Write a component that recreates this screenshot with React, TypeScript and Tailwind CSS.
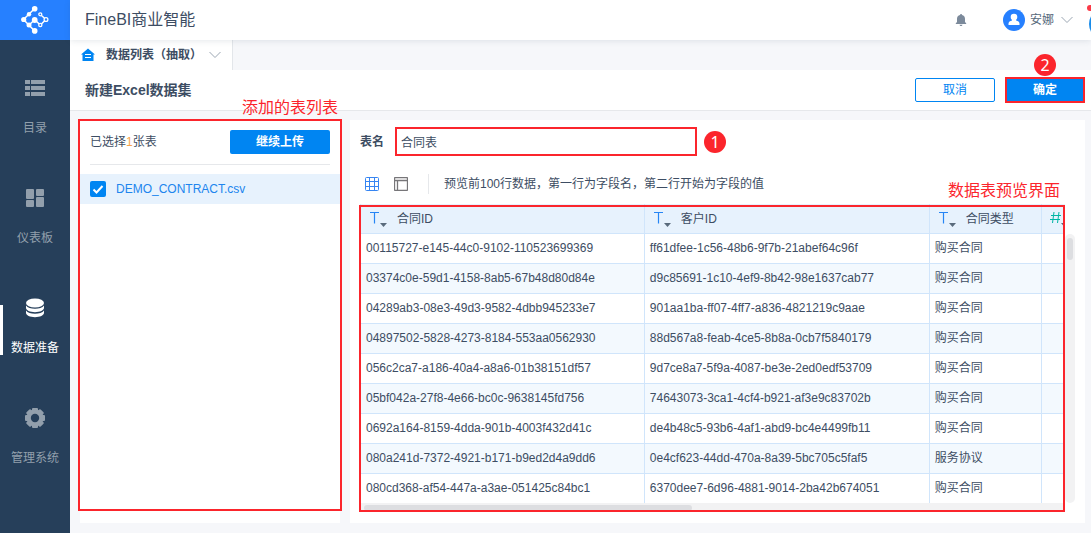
import React from "react";

const ROWS = [
  ["00115727-e145-44c0-9102-110523699369", "ff61dfee-1c56-48b6-9f7b-21abef64c96f", "购买合同"],
  ["03374c0e-59d1-4158-8ab5-67b48d80d84e", "d9c85691-1c10-4ef9-8b42-98e1637cab77", "购买合同"],
  ["04289ab3-08e3-49d3-9582-4dbb945233e7", "901aa1ba-ff07-4ff7-a836-4821219c9aae", "购买合同"],
  ["04897502-5828-4273-8184-553aa0562930", "88d567a8-feab-4ce5-8b8a-0cb7f5840179", "购买合同"],
  ["056c2ca7-a186-40a4-a8a6-01b38151df57", "9d7ce8a7-5f9a-4087-be3e-2ed0edf53709", "购买合同"],
  ["05bf042a-27f8-4e66-bc0c-9638145fd756", "74643073-3ca1-4cf4-b921-af3e9c83702b", "购买合同"],
  ["0692a164-8159-4dda-901b-4003f432d41c", "de4b48c5-93b6-4af1-abd9-bc4e4499fb11", "购买合同"],
  ["080a241d-7372-4921-b171-b9ed2d4a9dd6", "0e4cf623-44dd-470a-8a39-5bc705c5faf5", "服务协议"],
  ["080cd368-af54-447a-a3ae-051425c84bc1", "6370dee7-6d96-4881-9014-2ba42b674051", "购买合同"],
];

function Logo() {
  return (
    <svg width="28" height="28" viewBox="0 0 28 28" fill="#fff" stroke="#fff" className="shrink-0" aria-hidden="true">
      <path d="M13.700 2.500 2.500 13.500 13.700 25M8 19l5.700-5.200 5.600 5.200M19.300 8.500l5.700 5-5.700 5.500" fill="none" strokeWidth="1.500" />
      <g stroke="none">
        <circle cx="13.700" cy="2.800" r="2.800" />
        <circle cx="8" cy="8.300" r="2.200" />
        <circle cx="2.700" cy="13.500" r="2.600" />
        <circle cx="8" cy="19" r="2.500" />
        <circle cx="13.700" cy="24.900" r="2.800" />
        <circle cx="13.700" cy="14" r="2.900" />
      </g>
      <circle cx="19.300" cy="8.300" r="1.500" fill="#2680ff" strokeWidth="1.300" />
      <circle cx="25" cy="13.500" r="1.900" fill="#2680ff" strokeWidth="1.300" />
      <circle cx="19.300" cy="19" r="1.600" fill="#2680ff" strokeWidth="1.300" />
    </svg>
  );
}

function CatalogIcon() {
  return (
    <svg width="20" height="20" viewBox="0 0 20 20" fill="currentColor" className="shrink-0" aria-hidden="true">
      <path d="M0 2h5v4H0zM6 2h14v4H6zM0 8h5v4H0zM6 8h14v4H6zM0 14h5v4H0zM6 14h14v4H6z" />
    </svg>
  );
}

function DashboardIcon() {
  return (
    <svg width="20" height="20" viewBox="0 0 20 20" fill="currentColor" className="shrink-0" aria-hidden="true">
      <rect x="1" y="1" width="8" height="10" rx="1" />
      <rect x="11" y="1" width="8" height="7" rx="1" />
      <rect x="1" y="12" width="8" height="7" rx="1" />
      <rect x="11" y="9" width="8" height="10" rx="1" />
    </svg>
  );
}

function DatabaseIcon() {
  return (
    <svg width="20" height="20" viewBox="0 0 20 20" fill="currentColor" className="shrink-0" aria-hidden="true">
      <ellipse cx="10" cy="5" rx="9" ry="4.500" />
      <path d="M1 7.500c1.500 2.300 5 3.200 9 3.200s7.500-.9 9-3.200v2.300c0 2.500-4 4.400-9 4.400s-9-1.900-9-4.400z" />
      <path d="M1 12.500c1.500 2.300 5 3.200 9 3.200s7.500-.9 9-3.200v2.300c0 2.500-4 4.400-9 4.400s-9-1.900-9-4.400z" />
    </svg>
  );
}

function GearIcon() {
  return (
    <svg width="20" height="20" viewBox="0 0 20 20" className="shrink-0" aria-hidden="true">
      <g fill="currentColor">
        <rect x="7" y="0" width="6" height="20" rx="1" />
        <rect x="7" y="0" width="6" height="20" rx="1" transform="rotate(45 10 10)" />
        <rect x="7" y="0" width="6" height="20" rx="1" transform="rotate(90 10 10)" />
        <rect x="7" y="0" width="6" height="20" rx="1" transform="rotate(135 10 10)" />
        <circle cx="10" cy="10" r="8.400" />
      </g>
      <circle cx="10" cy="10" r="4.200" fill="#263f5a" />
    </svg>
  );
}

function HomeIcon() {
  return (
    <svg width="14" height="14" viewBox="0 0 14 14" className="shrink-0" aria-hidden="true">
      <path d="M7 0.500 14 6.500H12.500V13H1.500V6.500H0z" fill="#0085f2" />
      <path d="M4 6.500h6M4 9.500h6" stroke="#fff" />
    </svg>
  );
}

function ChevronIcon() {
  return (
    <svg width="12" height="8" viewBox="0 0 12 8" fill="none" stroke="currentColor" className="shrink-0" aria-hidden="true">
      <path d="M.5 1 6 6.500 11.500 1" />
    </svg>
  );
}

function BellIcon() {
  return (
    <svg width="12" height="12" viewBox="0 0 12 12" fill="#7c8a9b" className="shrink-0" aria-hidden="true">
      <path d="M6 0c.6 0 1 .4 1 .9C8.900 1.300 10 2.800 10 4.800V8l1.200 1.300v.7H.8v-.7L2 8V4.800C2 2.800 3.100 1.300 5 .9 5 .4 5.400 0 6 0zM4.500 10.700h3C7.300 11.600 6.700 12 6 12s-1.300-.4-1.500-1.300z" />
    </svg>
  );
}

function AvatarIcon() {
  return (
    <svg width="22" height="22" viewBox="0 0 22 22" className="shrink-0" aria-hidden="true">
      <circle cx="11" cy="11" r="11" fill="#2680ff" />
      <circle cx="11" cy="8" r="3.300" fill="#fff" />
      <path d="M9 10h4v1.500c2 .6 3.500 1.300 3.500 3V16h-11v-1.500c0-1.700 1.500-2.400 3.500-3z" fill="#fff" />
    </svg>
  );
}

function GridIcon() {
  return (
    <svg width="14" height="14" viewBox="0 0 14 14" fill="none" stroke="#3685f2" className="shrink-0" aria-hidden="true">
      <rect x=".5" y=".5" width="13" height="13" rx="1" />
      <path d="M.5 4.500h13M.5 9.500h13M4.500.5v13M9.500.5v13" />
    </svg>
  );
}

function LayoutIcon() {
  return (
    <svg width="14" height="14" viewBox="0 0 14 14" fill="none" stroke="#777679" className="shrink-0" aria-hidden="true">
      <rect x=".5" y=".5" width="13" height="13" rx="1" strokeWidth="1.300" />
      <path d="M.5 3.500h13M3.500 3.500v10" strokeWidth="1.300" />
    </svg>
  );
}

function FieldType({ numeric = false }: { numeric?: boolean }) {
  return (
    <svg width="20" height="18" viewBox="0 0 20 18" fill="none" className="shrink-0" aria-hidden="true">
      {numeric ? (
        <path d="M4 2 2.500 13M9 2 7.500 13M1 5.500h10M0 9.500h10" stroke="#00b5a5" />
      ) : (
        <path d="M1 2.500h9M5.500 2.500v11" stroke="#2685f5" strokeWidth="1.200" />
      )}
      <path d="M11 13h7l-3.500 4z" fill="#5a6b7c" />
    </svg>
  );
}

function Badge({ n }: { n: number }) {
  return (
    <span className="flex size-[22px] items-center justify-center rounded-full bg-[#fb252c] font-['Noto_Sans',sans-serif] text-base leading-none text-white">
      {n}
    </span>
  );
}

const NAV = [
  { label: "目录", icon: <CatalogIcon /> },
  { label: "仪表板", icon: <DashboardIcon /> },
  { label: "数据准备", icon: <DatabaseIcon />, active: true },
  { label: "管理系统", icon: <GearIcon /> },
];

function Sidebar() {
  return (
    <aside className="flex w-[70px] shrink-0 flex-col bg-[#263f5a]">
      <a href="#home" aria-label="FineBI" className="flex h-10 items-center justify-center bg-[#2680ff]">
        <Logo />
      </a>
      <nav className="flex flex-col gap-[50px] pt-[38px]">
        {NAV.map((item) => (
          <a
            key={item.label}
            href={"#" + item.label}
            className={
              item.active
                ? "relative flex h-[60px] flex-col items-center text-white"
                : "flex h-[60px] flex-col items-center text-[#929fac]"
            }
          >
            {item.active && <span className="absolute top-[7px] left-0 h-[50px] w-[3px] bg-white" />}
            {item.icon}
            <span className="mt-5 leading-5">{item.label}</span>
          </a>
        ))}
      </nav>
    </aside>
  );
}

function Header() {
  return (
    <header className="relative z-10 flex h-10 shrink-0 items-center bg-white pr-[18px] pl-[15px] shadow-[0_1px_6px_rgba(38,63,90,0.12)]">
      <h1 className="flex-1 text-base font-normal">FineBI商业智能</h1>
      <button aria-label="通知" className="mr-9">
        <BellIcon />
      </button>
      <button className="flex items-center text-[#55677a]">
        <AvatarIcon />
        <span className="mr-[7px] ml-[5px]">安娜</span>
        <span className="text-[#9ba6b2]">
          <ChevronIcon />
        </span>
      </button>
      <div className="absolute top-0 right-0 h-10 w-1 overflow-hidden">
        <span className="absolute top-2 left-[2px] size-8 rounded-full bg-[#1a8cea]" />
        <span className="absolute top-[5px] left-0 size-[6px] rounded-full bg-[#fb3a48]" />
      </div>
    </header>
  );
}

function TablePanel() {
  return (
    <div className="relative flex min-w-0 flex-1 flex-col pr-[10px]">
      <div className="flex-1 overflow-hidden">
        <table className="w-full table-fixed border-separate border-spacing-0 text-left">
          <colgroup>
            <col className="w-[40.400%]" />
            <col className="w-[40.400%]" />
            <col className="w-[16%]" />
            <col />
          </colgroup>
          <thead>
            <tr className="h-[30px] bg-[#e7f2fd]">
              {["合同ID", "客户ID", "合同类型"].map((name) => (
                <th key={name} className="border-r border-b border-[#d0e5fb] p-0 pl-2 font-normal first:border-l">
                  <span className="flex items-center gap-2">
                    <FieldType />
                    {name}
                  </span>
                </th>
              ))}
              <th aria-label="数值" className="overflow-hidden border-b border-[#d0e5fb] p-0 pl-2">
                <FieldType numeric />
              </th>
            </tr>
          </thead>
          <tbody>
            {ROWS.map((row) => (
              <tr key={row[0]} className="h-[30px] even:bg-[#f3f9fe]">
                {row.map((cell, i) => (
                  <td key={i} className="truncate border-r border-b border-[#d0e5fb] p-0 pb-[2px] pl-[5px] first:border-l">
                    {cell}
                  </td>
                ))}
                <td className="border-b border-[#d0e5fb] p-0" />
              </tr>
            ))}
          </tbody>
        </table>
      </div>
      <div className="absolute top-[30px] right-0 bottom-[9px] w-[10px] rounded-full bg-[#f2f2f3] p-[2px] pt-1">
        <div className="h-[22px] rounded-full bg-[#dddee1]" />
      </div>
      <div className="absolute right-[10px] bottom-0 left-0 h-[9px] bg-[#f2f2f3] px-1 py-[2px]">
        <div className="h-[6px] w-[47%] rounded-full bg-[#dddee1]" />
      </div>
      <div className="pointer-events-none absolute top-px right-[10px] bottom-0 -left-px border-2 border-[#fb252c]" />
      <span className="absolute right-[15px] bottom-full mb-px text-base leading-6 text-[#fb252c]">数据表预览界面</span>
    </div>
  );
}

export default function App() {
  return (
    <div className="flex min-h-screen bg-[#f6f7fa] font-['Liberation_Sans','Noto_Sans_CJK_SC',sans-serif] text-xs text-[#3d4d63]">
      <Sidebar />
      <div className="flex min-w-0 flex-1 flex-col">
        <Header />
        <div className="flex h-[30px]">
          <button className="flex w-[163px] items-center border-r border-[#e3e6ea] bg-white pl-[11px] font-bold">
            <HomeIcon />
            <span className="mr-[7px] ml-[11px]">数据列表（抽取）</span>
            <span className="text-[#9ba6b2]">
              <ChevronIcon />
            </span>
          </button>
        </div>
        <div className="flex h-[41px] items-center gap-[10px] border-b border-[#e6e8eb] bg-white pr-[6px] pl-[15px]">
          <h2 className="flex-1 text-sm font-bold">新建Excel数据集</h2>
          <button className="h-6 w-20 rounded-xs border border-[#0085f2] text-[#0085f2]">取消</button>
          <div className="relative">
            <button className="block h-[26px] w-20 border-2 border-[#fb252c] bg-[#0085f2] font-bold text-white">确定</button>
            <div className="absolute -top-[23px] left-[29px]">
              <Badge n={2} />
            </div>
          </div>
        </div>
        <main className="flex flex-1 gap-[10px] pt-[9px] pr-[6px] pb-[10px] pl-[10px]">
          <section className="relative w-[260px] shrink-0 bg-white">
            <div className="mx-[10px] flex h-[45px] items-center justify-between border-b border-[#e6e8eb]">
              <span>
                已选择<span className="text-[#f7a44a]">1</span>张表
              </span>
              <button className="h-6 w-[100px] rounded-xs bg-[#0085f2] font-bold text-white">继续上传</button>
            </div>
            <label className="mt-[9px] flex h-[30px] items-center gap-[10px] bg-[#e7f2fd] pl-[10px] text-[#2085ee]">
              <span className="relative flex size-4">
                <input type="checkbox" defaultChecked className="size-4 appearance-none rounded-xs bg-[#0085f2]" />
                <svg viewBox="0 0 16 16" className="pointer-events-none absolute inset-0" fill="none" stroke="#fff" strokeWidth="2" aria-hidden="true">
                  <path d="m3.500 8.500 3 3 6-6.500" />
                </svg>
              </span>
              DEMO_CONTRACT.csv
            </label>
            <div className="pointer-events-none absolute -inset-x-[2px] -top-px bottom-3 border-2 border-[#fb252c]" />
            <span className="absolute right-[2px] bottom-full text-base leading-6 text-[#fb252c]">添加的表列表</span>
          </section>
          <section className="flex min-w-0 flex-1 flex-col bg-white pr-[10px] pb-[11px] pl-[10px]">
            <div className="flex h-[43px] items-center">
              <label htmlFor="table-name" className="w-[35px] font-bold">
                表名
              </label>
              <input
                id="table-name"
                defaultValue="合同表"
                className="h-[29px] w-[302px] border-2 border-[#fb252c] px-1 outline-none"
              />
              <span className="ml-[7px]">
                <Badge n={1} />
              </span>
            </div>
            <div className="flex h-[41px] items-center pl-[5px]">
              <button aria-label="表格预览" className="mr-[15px]">
                <GridIcon />
              </button>
              <button aria-label="布局预览">
                <LayoutIcon />
              </button>
              <span className="mr-[15px] ml-5 h-5 w-px bg-[#e6e8eb]" />
              <span>预览前100行数据，第一行为字段名，第二行开始为字段的值</span>
            </div>
            <TablePanel />
          </section>
        </main>
      </div>
    </div>
  );
}
